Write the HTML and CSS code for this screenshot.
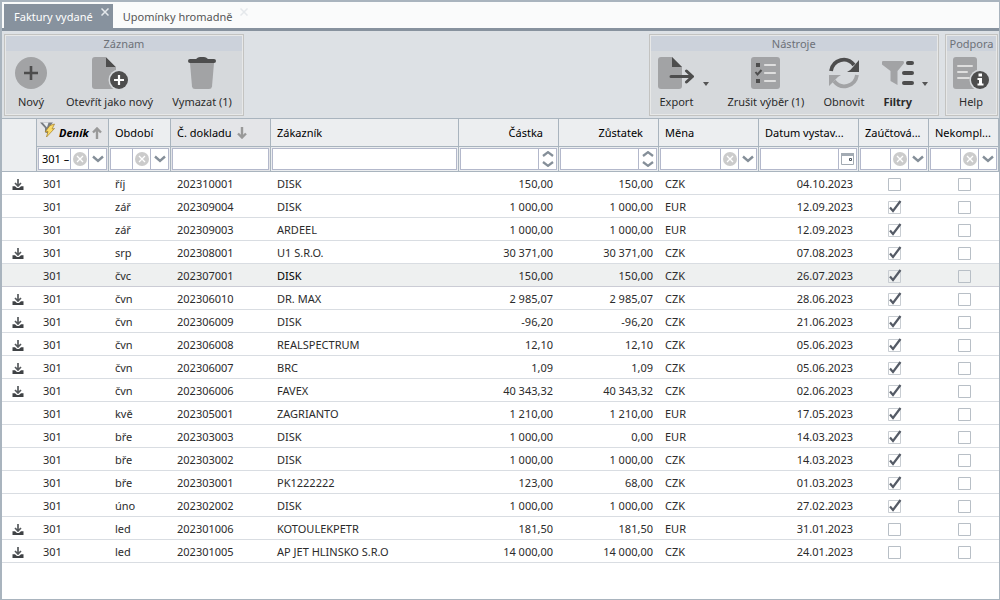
FILE: index.html
```html
<!DOCTYPE html>
<html lang="cs">
<head>
<meta charset="utf-8">
<title>Faktury vydané</title>
<link rel="stylesheet" href="styles.css">
</head>
<body>
<svg class="defs" aria-hidden="true">
  <symbol id="i-down" viewBox="0 0 12 12"><path d="M6 1v6.500M3 5l3 3 3-3" fill="none" stroke="#55595c" stroke-width="1.700"/><path d="M.5 8.300H3L5 10h2l2-1.700h2.500V12H.5z" fill="#3f4245"/></symbol>
  <symbol id="i-clear" viewBox="0 0 14 14"><circle cx="7" cy="7" r="7" fill="#cbcbcb"/><path d="M4 4l6 6M10 4l-6 6" stroke="#fff" stroke-width="1.300"/></symbol>
  <symbol id="i-chev" viewBox="0 0 12 8"><path d="M1 1.500l5 4.500 5-4.500" fill="none" stroke="#858f99" stroke-width="2.400"/></symbol>
  <symbol id="i-spin" viewBox="0 0 12 16"><path d="M1 5l5-3.800L11 5M1 11l5 3.800L11 11" fill="none" stroke="#858f99" stroke-width="2.300"/></symbol>
  <symbol id="i-cal" viewBox="0 0 13 12"><path d="M.5 .5h12v11H.5z" fill="#fff" stroke="#a3abb3"/><path d="M0 0h13v3H0z" fill="#a3abb3"/><path d="M8.500 5.500h2v2h-2z" fill="none" stroke="#4d5660"/></symbol>
  <symbol id="i-sort" viewBox="0 0 10 12"><path d="M5 12V2M1 5.500l4-4 4 4" fill="none" stroke="#999" stroke-width="2.400"/></symbol>
</svg>
<main class="window">
  <nav class="tabs">
    <div class="tab tab-active"><a href="#faktury">Faktury vydané</a><button class="tab-close" aria-label="Zavřít"><svg viewBox="0 0 8 8"><path d="M.5 .5l7 7M7.500 .5l-7 7"/></svg></button></div>
    <div class="tab"><a href="#upominky">Upomínky hromadně</a><button class="tab-close" aria-label="Zavřít"><svg viewBox="0 0 8 8"><path d="M.5 .5l7 7M7.500 .5l-7 7"/></svg></button></div>
  </nav>
  <header class="toolbar">
    <section class="group">
      <h2>Záznam</h2>
      <div class="tools">
        <button class="tool"><svg width="32" height="32" viewBox="0 0 32 32"><circle cx="16" cy="16" r="16" fill="#a2a3a5"/><path d="M16 9v14M9 16h14" stroke="#4d4d4d" stroke-width="2.600"/></svg><span>Nový</span></button>
        <button class="tool"><svg width="36" height="32" viewBox="0 0 36 32"><path d="M3 0h11l10 10v19q0 3-3 3H3q-3 0-3-3V3q0-3 3-3z" fill="#a2a3a5"/><path d="M14 0l10 10H14z" fill="#4d4d4d"/><path d="M14 0h10v10z" fill="#d6d9dc"/><circle cx="27" cy="23" r="10.500" fill="#d6d9dc"/><circle cx="27" cy="23" r="9" fill="#4d4d4d"/><path d="M27 18v10M22 23h10" stroke="#fff" stroke-width="2.200"/></svg><span>Otevřít jako nový</span></button>
        <button class="tool"><svg width="28" height="32" viewBox="0 0 28 32"><path d="M2 6h24l-2 23.500q-.3 2.500-3 2.500H7q-2.700 0-3-2.500z" fill="#a2a3a5"/><path d="M2 2h6q2-2 4-2h4q2 0 4 2h6q2 0 2 2t-2 2H2Q0 6 0 4t2-2z" fill="#4d4d4d"/></svg><span>Vymazat (1)</span></button>
      </div>
    </section>
    <section class="group group-right">
      <h2>Nástroje</h2>
      <div class="tools">
        <button class="tool tool-menu"><svg width="36" height="32" viewBox="0 0 36 32"><path d="M3 0h11l10 10v19q0 3-3 3H3q-3 0-3-3V3q0-3 3-3z" fill="#a2a3a5"/><path d="M14 0l10 10H14z" fill="#4d4d4d"/><path d="M13 19.500h21M28.500 14l6 5.500-6 5.500" fill="none" stroke="#4d4d4d" stroke-width="3" stroke-linecap="round" stroke-linejoin="round"/></svg><span>Export</span></button>
        <button class="tool"><svg width="29" height="32" viewBox="0 0 29 32"><rect width="29" height="32" rx="3" fill="#a2a3a5"/><path d="M5 6h4v4H5zM5 22h4v4H5z" fill="#4d4d4d"/><path d="M4.500 15l2 2.500L10.500 13" fill="none" stroke="#4d4d4d" stroke-width="2"/><path d="M14 8h10M14 16h10M14 24h10" stroke="#dedede" stroke-width="2.200" stroke-linecap="round"/></svg><span>Zrušit výběr (1)</span></button>
        <button class="tool"><svg width="32" height="32" viewBox="0 0 32 32"><path d="M3 14C5 2 19-1 26 8" fill="none" stroke="#4d4d4d" stroke-width="3.800"/><path d="M31 3v12H19q4-2 6-5z" fill="#4d4d4d"/><path d="M29 18c-2 12-16 15-23 6" fill="none" stroke="#a2a3a5" stroke-width="3.800"/><path d="M1 29V18h12q-4 2-6 5z" fill="#a2a3a5"/></svg><span>Obnovit</span></button>
        <button class="tool tool-menu tool-strong"><svg width="32" height="32" viewBox="0 0 32 32"><path d="M1 4h20q2 1 0 3.500L15.500 14v14l-7-4V14L0 7.500Q-1 5 1 4z" fill="#a2a3a5"/><path d="M26 6h4M22 16h8M22 26h8" stroke="#4d4d4d" stroke-width="4" stroke-linecap="round"/></svg><span>Filtry</span></button>
      </div>
    </section>
    <section class="group">
      <h2>Podpora</h2>
      <div class="tools">
        <button class="tool tool-help"><svg width="36" height="32" viewBox="0 0 36 32"><rect width="24" height="32" rx="3" fill="#a2a3a5"/><path d="M5 9h14M5 15h9M5 21h11" stroke="#dedede" stroke-width="2" stroke-linecap="round"/><circle cx="27" cy="23" r="10.500" fill="#d6d9dc"/><circle cx="27" cy="23" r="9" fill="#4d4d4d"/><path d="M25.500 16.500h3.500v3h-3.500zM24.500 21h4.500v5.500h1.500v2h-6v-2H26V23h-1.500z" fill="#fff"/></svg><span>Help</span></button>
      </div>
    </section>
  </header>
  <table class="grid">
    <colgroup><col class="c-icon"><col class="c-book"><col class="c-period"><col class="c-amount"><col><col class="c-amount"><col class="c-amount"><col class="c-amount"><col class="c-amount"><col class="c-flag"><col class="c-flag"></colgroup>
    <thead>
      <tr class="heads">
        <th rowspan="2" aria-label="Stažení"></th>
        <th class="sorted"><div class="head head-book"><svg class="funnel" width="17" height="17" viewBox="0 0 17 17"><path d="M1 1.500h13L9.500 7v6L6 11V7z" fill="#777b80"/><path d="M3.500 1.500h6L8 6.500z" fill="#e9ecef"/><path d="M11 4.500L15.500 3 13 8l2.500-.5-8 8.500 1.500-5.500-3 .5z" fill="#fbdc6a" stroke="#a37d22" stroke-width=".7"/></svg><em>Deník</em><svg width="10" height="12"><use href="#i-sort"/></svg></div></th>
        <th><div class="head">Období</div></th>
        <th class="sorted"><div class="head">Č. dokladu<svg class="flip" width="10" height="12"><use href="#i-sort"/></svg></div></th>
        <th><div class="head">Zákazník</div></th>
        <th><div class="head head-num">Částka</div></th>
        <th><div class="head head-num">Zůstatek</div></th>
        <th><div class="head">Měna</div></th>
        <th><div class="head">Datum vystav...</div></th>
        <th><div class="head">Zaúčtová...</div></th>
        <th><div class="head">Nekompl...</div></th>
      </tr>
      <tr class="filters">
        <th class="sorted"><div class="field"><input type="text" value="301 –" aria-label="Deník"><button aria-label="Vymazat"><svg width="14" height="14"><use href="#i-clear"/></svg></button><button aria-label="Vybrat"><svg width="12" height="8"><use href="#i-chev"/></svg></button></div></th>
        <th><div class="field"><input type="text" aria-label="Období"><button aria-label="Vymazat"><svg width="14" height="14"><use href="#i-clear"/></svg></button><button aria-label="Vybrat"><svg width="12" height="8"><use href="#i-chev"/></svg></button></div></th>
        <th class="sorted"><div class="field"><input type="text" aria-label="Č. dokladu"></div></th>
        <th><div class="field"><input type="text" aria-label="Zákazník"></div></th>
        <th><div class="field"><input type="text" aria-label="Částka"><button aria-label="Změnit"><svg width="12" height="16"><use href="#i-spin"/></svg></button></div></th>
        <th><div class="field"><input type="text" aria-label="Zůstatek"><button aria-label="Změnit"><svg width="12" height="16"><use href="#i-spin"/></svg></button></div></th>
        <th><div class="field"><input type="text" aria-label="Měna"><button aria-label="Vymazat"><svg width="14" height="14"><use href="#i-clear"/></svg></button><button aria-label="Vybrat"><svg width="12" height="8"><use href="#i-chev"/></svg></button></div></th>
        <th><div class="field"><input type="text" aria-label="Datum vystavení"><button aria-label="Kalendář"><svg width="13" height="12"><use href="#i-cal"/></svg></button></div></th>
        <th><div class="field"><input type="text" aria-label="Zaúčtováno"><button aria-label="Vymazat"><svg width="14" height="14"><use href="#i-clear"/></svg></button><button aria-label="Vybrat"><svg width="12" height="8"><use href="#i-chev"/></svg></button></div></th>
        <th><div class="field"><input type="text" aria-label="Nekompletní"><button aria-label="Vymazat"><svg width="14" height="14"><use href="#i-clear"/></svg></button><button aria-label="Vybrat"><svg width="12" height="8"><use href="#i-chev"/></svg></button></div></th>
      </tr>
    </thead>
    <tbody>
      <tr><td><svg class="dl"><use href="#i-down"/></svg></td><td>301</td><td>říj</td><td>202310001</td><td>DISK</td><td class="num">150,00</td><td class="num">150,00</td><td>CZK</td><td class="num">04.10.2023</td><td class="flag"><input type="checkbox" aria-label="Zaúčtováno"></td><td class="flag"><input type="checkbox" aria-label="Nekompletní"></td></tr>
      <tr><td></td><td>301</td><td>zář</td><td>202309004</td><td>DISK</td><td class="num">1 000,00</td><td class="num">1 000,00</td><td>EUR</td><td class="num">12.09.2023</td><td class="flag"><input type="checkbox" checked aria-label="Zaúčtováno"></td><td class="flag"><input type="checkbox" aria-label="Nekompletní"></td></tr>
      <tr><td></td><td>301</td><td>zář</td><td>202309003</td><td>ARDEEL</td><td class="num">1 000,00</td><td class="num">1 000,00</td><td>EUR</td><td class="num">12.09.2023</td><td class="flag"><input type="checkbox" checked aria-label="Zaúčtováno"></td><td class="flag"><input type="checkbox" aria-label="Nekompletní"></td></tr>
      <tr><td><svg class="dl"><use href="#i-down"/></svg></td><td>301</td><td>srp</td><td>202308001</td><td>U1 S.R.O.</td><td class="num">30 371,00</td><td class="num">30 371,00</td><td>CZK</td><td class="num">07.08.2023</td><td class="flag"><input type="checkbox" checked aria-label="Zaúčtováno"></td><td class="flag"><input type="checkbox" aria-label="Nekompletní"></td></tr>
      <tr class="selected"><td></td><td>301</td><td>čvc</td><td>202307001</td><td class="current">DISK</td><td class="num">150,00</td><td class="num">150,00</td><td>CZK</td><td class="num">26.07.2023</td><td class="flag"><input type="checkbox" checked aria-label="Zaúčtováno"></td><td class="flag"><input type="checkbox" aria-label="Nekompletní"></td></tr>
      <tr><td><svg class="dl"><use href="#i-down"/></svg></td><td>301</td><td>čvn</td><td>202306010</td><td>DR. MAX</td><td class="num">2 985,07</td><td class="num">2 985,07</td><td>CZK</td><td class="num">28.06.2023</td><td class="flag"><input type="checkbox" checked aria-label="Zaúčtováno"></td><td class="flag"><input type="checkbox" aria-label="Nekompletní"></td></tr>
      <tr><td><svg class="dl"><use href="#i-down"/></svg></td><td>301</td><td>čvn</td><td>202306009</td><td>DISK</td><td class="num">-96,20</td><td class="num">-96,20</td><td>CZK</td><td class="num">21.06.2023</td><td class="flag"><input type="checkbox" checked aria-label="Zaúčtováno"></td><td class="flag"><input type="checkbox" aria-label="Nekompletní"></td></tr>
      <tr><td><svg class="dl"><use href="#i-down"/></svg></td><td>301</td><td>čvn</td><td>202306008</td><td>REALSPECTRUM</td><td class="num">12,10</td><td class="num">12,10</td><td>CZK</td><td class="num">05.06.2023</td><td class="flag"><input type="checkbox" checked aria-label="Zaúčtováno"></td><td class="flag"><input type="checkbox" aria-label="Nekompletní"></td></tr>
      <tr><td><svg class="dl"><use href="#i-down"/></svg></td><td>301</td><td>čvn</td><td>202306007</td><td>BRC</td><td class="num">1,09</td><td class="num">1,09</td><td>CZK</td><td class="num">05.06.2023</td><td class="flag"><input type="checkbox" checked aria-label="Zaúčtováno"></td><td class="flag"><input type="checkbox" aria-label="Nekompletní"></td></tr>
      <tr><td><svg class="dl"><use href="#i-down"/></svg></td><td>301</td><td>čvn</td><td>202306006</td><td>FAVEX</td><td class="num">40 343,32</td><td class="num">40 343,32</td><td>CZK</td><td class="num">02.06.2023</td><td class="flag"><input type="checkbox" checked aria-label="Zaúčtováno"></td><td class="flag"><input type="checkbox" aria-label="Nekompletní"></td></tr>
      <tr><td></td><td>301</td><td>kvě</td><td>202305001</td><td>ZAGRIANTO</td><td class="num">1 210,00</td><td class="num">1 210,00</td><td>EUR</td><td class="num">17.05.2023</td><td class="flag"><input type="checkbox" checked aria-label="Zaúčtováno"></td><td class="flag"><input type="checkbox" aria-label="Nekompletní"></td></tr>
      <tr><td></td><td>301</td><td>bře</td><td>202303003</td><td>DISK</td><td class="num">1 000,00</td><td class="num">0,00</td><td>EUR</td><td class="num">14.03.2023</td><td class="flag"><input type="checkbox" checked aria-label="Zaúčtováno"></td><td class="flag"><input type="checkbox" aria-label="Nekompletní"></td></tr>
      <tr><td></td><td>301</td><td>bře</td><td>202303002</td><td>DISK</td><td class="num">1 000,00</td><td class="num">1 000,00</td><td>CZK</td><td class="num">14.03.2023</td><td class="flag"><input type="checkbox" checked aria-label="Zaúčtováno"></td><td class="flag"><input type="checkbox" aria-label="Nekompletní"></td></tr>
      <tr><td></td><td>301</td><td>bře</td><td>202303001</td><td>PK1222222</td><td class="num">123,00</td><td class="num">68,00</td><td>CZK</td><td class="num">01.03.2023</td><td class="flag"><input type="checkbox" checked aria-label="Zaúčtováno"></td><td class="flag"><input type="checkbox" aria-label="Nekompletní"></td></tr>
      <tr><td></td><td>301</td><td>úno</td><td>202302002</td><td>DISK</td><td class="num">1 000,00</td><td class="num">1 000,00</td><td>CZK</td><td class="num">27.02.2023</td><td class="flag"><input type="checkbox" checked aria-label="Zaúčtováno"></td><td class="flag"><input type="checkbox" aria-label="Nekompletní"></td></tr>
      <tr><td><svg class="dl"><use href="#i-down"/></svg></td><td>301</td><td>led</td><td>202301006</td><td>KOTOULEKPETR</td><td class="num">181,50</td><td class="num">181,50</td><td>EUR</td><td class="num">31.01.2023</td><td class="flag"><input type="checkbox" aria-label="Zaúčtováno"></td><td class="flag"><input type="checkbox" aria-label="Nekompletní"></td></tr>
      <tr><td><svg class="dl"><use href="#i-down"/></svg></td><td>301</td><td>led</td><td>202301005</td><td>AP JET HLINSKO S.R.O</td><td class="num">14 000,00</td><td class="num">14 000,00</td><td>CZK</td><td class="num">24.01.2023</td><td class="flag"><input type="checkbox" aria-label="Zaúčtováno"></td><td class="flag"><input type="checkbox" aria-label="Nekompletní"></td></tr>
    </tbody>
  </table>
</main>
</body>
</html>
```
FILE: styles.css
```css
* { box-sizing: border-box; }
body { margin: 0; font: 11px/16px "Noto Sans", "Open Sans", sans-serif; color: #2b2b2b; background: #fff; }
button, input { font: inherit; color: inherit; margin: 0; padding: 0; border: 0; background: none; border-radius: 0; }
a { color: inherit; text-decoration: none; }
svg { display: block; flex: none; }
.defs { position: absolute; width: 0; height: 0; }
.window { min-height: 100vh; border: 1px solid #a9b4be; border-width: 2px 1px 1px 2px; }

.tabs { display: flex; padding: 2px 2px 0; background: #fafbfb; border-bottom: 3px solid #87929e; }
.tab { display: flex; align-items: flex-start; height: 24px; padding-left: 10px; color: #555; white-space: nowrap; }
.tab a { padding-top: 5px; }
.tab-active { background: #87929e; color: #fff; }
.tab-close { padding: 4px 4px 0 8px; }
.tab-close svg { width: 8px; height: 8px; fill: none; stroke: #e4e8eb; stroke-width: 1.500; }

.toolbar { display: flex; gap: 6px; padding: 3px 1px 2px 2px; background: #dde1e5; border-bottom: 1px solid #a9b4be; }
.group { padding: 1px; border: 1px solid #c3c3c1; outline: 1px solid #e7e8e8; outline-offset: -2px; background: #d6d9dc; }
.group-right { margin-left: auto; }
.group h2 { margin: 0; font-size: 11px; font-weight: 400; line-height: 15px; text-align: center; color: #6c7178; background: #ccd2db; }
.tools { display: flex; padding-bottom: 4px; }
.tool { display: flex; flex-direction: column; align-items: center; padding: 6px 10px 0 9px; white-space: nowrap; }
.tool span { padding-top: 5px; }
.tool-menu { position: relative; padding-right: 25px; }
.tool-menu svg { margin: 0 -4px; }
.tool-menu::after { content: ""; position: absolute; right: 9px; top: 31px; border: 3px solid transparent; border-top: 4px solid #555; border-bottom: 0; }
.tool-strong { font-weight: 700; }
.tool-help { padding: 6px 7px 0 6px; }

.grid { width: 100%; table-layout: fixed; border-collapse: separate; border-spacing: 0; white-space: nowrap; }
.c-icon { width: 35px; }
.c-book { width: 72px; }
.c-period { width: 62px; }
.c-amount { width: 100px; }
.c-flag { width: 70px; }
.grid th { padding: 0; font-weight: 400; color: #000; background: #eceef0; border: 1px solid #a9b4be; border-width: 0 1px 1px 0; }
.grid th.sorted { background: #e4e5e8; }
.head { display: flex; align-items: center; gap: 5px; height: 27px; padding-left: 6px; overflow: hidden; }
.head-num { justify-content: flex-end; padding-right: 15px; }
.head-book { padding-left: 2px; gap: 3px; }
.head em { font-weight: 700; }
.funnel { align-self: flex-start; margin-top: 2px; }
.flip { transform: scaleY(-1); }
.field { display: flex; height: 22px; margin: 1px; background: #fff; border: 1px solid #b3b8cb; }
.field input { flex: 1; min-width: 0; width: 0; padding-left: 3px; }
.field button { display: flex; flex: none; align-items: center; justify-content: center; width: 18px; border-left: 1px solid #b3b8cb; }

.grid td { height: 23px; padding: 1px 6px 0 6px; line-height: 16px; border-bottom: 1px solid #d9dde2; }
.grid td.num { text-align: right; }
.grid td.flag { padding: 0; text-align: center; }
.dl { width: 12px; height: 12px; margin-left: 4px; }
.selected td { background: #eef0f0; border-color: #cbccd5; }
.selected .current { color: #000; }
.flag input { appearance: none; display: block; width: 15px; height: 15px; margin: 0 auto; background: url("data:image/svg+xml,%3Csvg xmlns='http://www.w3.org/2000/svg' width='15' height='15'%3E%3Cpath d='M1.500 2.500h12v12h-12z' fill='none' stroke='%23b8bfc6'/%3E%3C/svg%3E"); }
.flag input:checked { background: url("data:image/svg+xml,%3Csvg xmlns='http://www.w3.org/2000/svg' width='15' height='15'%3E%3Cpath d='M1.500 2.500h12v12h-12z' fill='none' stroke='%23c8cdd2'/%3E%3Cpath d='M3 8.500L6 12L13.500 2' fill='none' stroke='%23555b66' stroke-width='2.200'/%3E%3C/svg%3E"); }
```
